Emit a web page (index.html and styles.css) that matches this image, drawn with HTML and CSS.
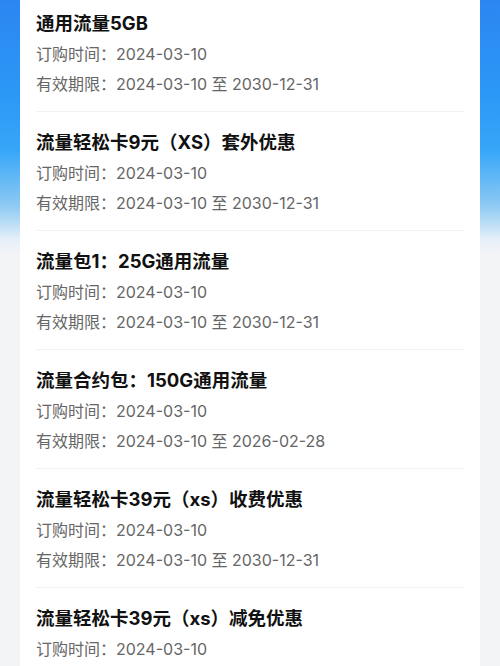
FILE: index.html
```html
<!DOCTYPE html>
<html lang="zh-CN">
<head>
  <meta charset="UTF-8">
  <meta name="viewport" content="width=device-width, initial-scale=1.0">
  <title>已订购业务</title>
  <link rel="stylesheet" href="styles.css">
</head>
<body>
  <div class="page">
    <ul class="list">
      <li class="item">
        <h3>通用流量5GB</h3>
        <p>订购时间：2024-03-10</p>
        <p>有效期限：2024-03-10 至 2030-12-31</p>
      </li>
      <li class="item">
        <h3>流量轻松卡9元（XS）套外优惠</h3>
        <p>订购时间：2024-03-10</p>
        <p>有效期限：2024-03-10 至 2030-12-31</p>
      </li>
      <li class="item">
        <h3>流量包1：25G通用流量</h3>
        <p>订购时间：2024-03-10</p>
        <p>有效期限：2024-03-10 至 2030-12-31</p>
      </li>
      <li class="item">
        <h3>流量合约包：150G通用流量</h3>
        <p>订购时间：2024-03-10</p>
        <p>有效期限：2024-03-10 至 2026-02-28</p>
      </li>
      <li class="item">
        <h3>流量轻松卡39元（xs）收费优惠</h3>
        <p>订购时间：2024-03-10</p>
        <p>有效期限：2024-03-10 至 2030-12-31</p>
      </li>
      <li class="item">
        <h3>流量轻松卡39元（xs）减免优惠</h3>
        <p>订购时间：2024-03-10</p>
        <p>有效期限：2024-03-10 至 2030-12-31</p>
      </li>
    </ul>
  </div>
</body>
</html>
```

FILE: styles.css
```css
* {
  box-sizing: border-box;
  margin: 0;
  padding: 0;
}
html, body {
  height: 100%;
}
body {
  font-family: Inter, "Noto Sans CJK SC", sans-serif;
  background: linear-gradient(180deg, #2c86f1 0px, #2b97f6 90px, #36a6f8 150px, #8cc9f3 205px, #e6f0f8 240px, #f3f4f6 255px, #f3f4f6 100%);
  color: #111;
  overflow: hidden;
}
.page {
  margin: 0 20px;
  background-color: #fff;
  min-height: 100%;
  padding: 0 16px;
}
.list {
  list-style: none;
  margin-top: -7px;
}
.item {
  padding: 18px 0 12px;
  border-bottom: 1px solid #f1f1f1;
}
.item h3 {
  font-size: 18.5px;
  font-weight: bold;
  line-height: 24px;
  margin-bottom: 4px;
  color: #111;
}
.item p {
  font-size: 16px;
  line-height: 30px;
  color: #666;
}
```
